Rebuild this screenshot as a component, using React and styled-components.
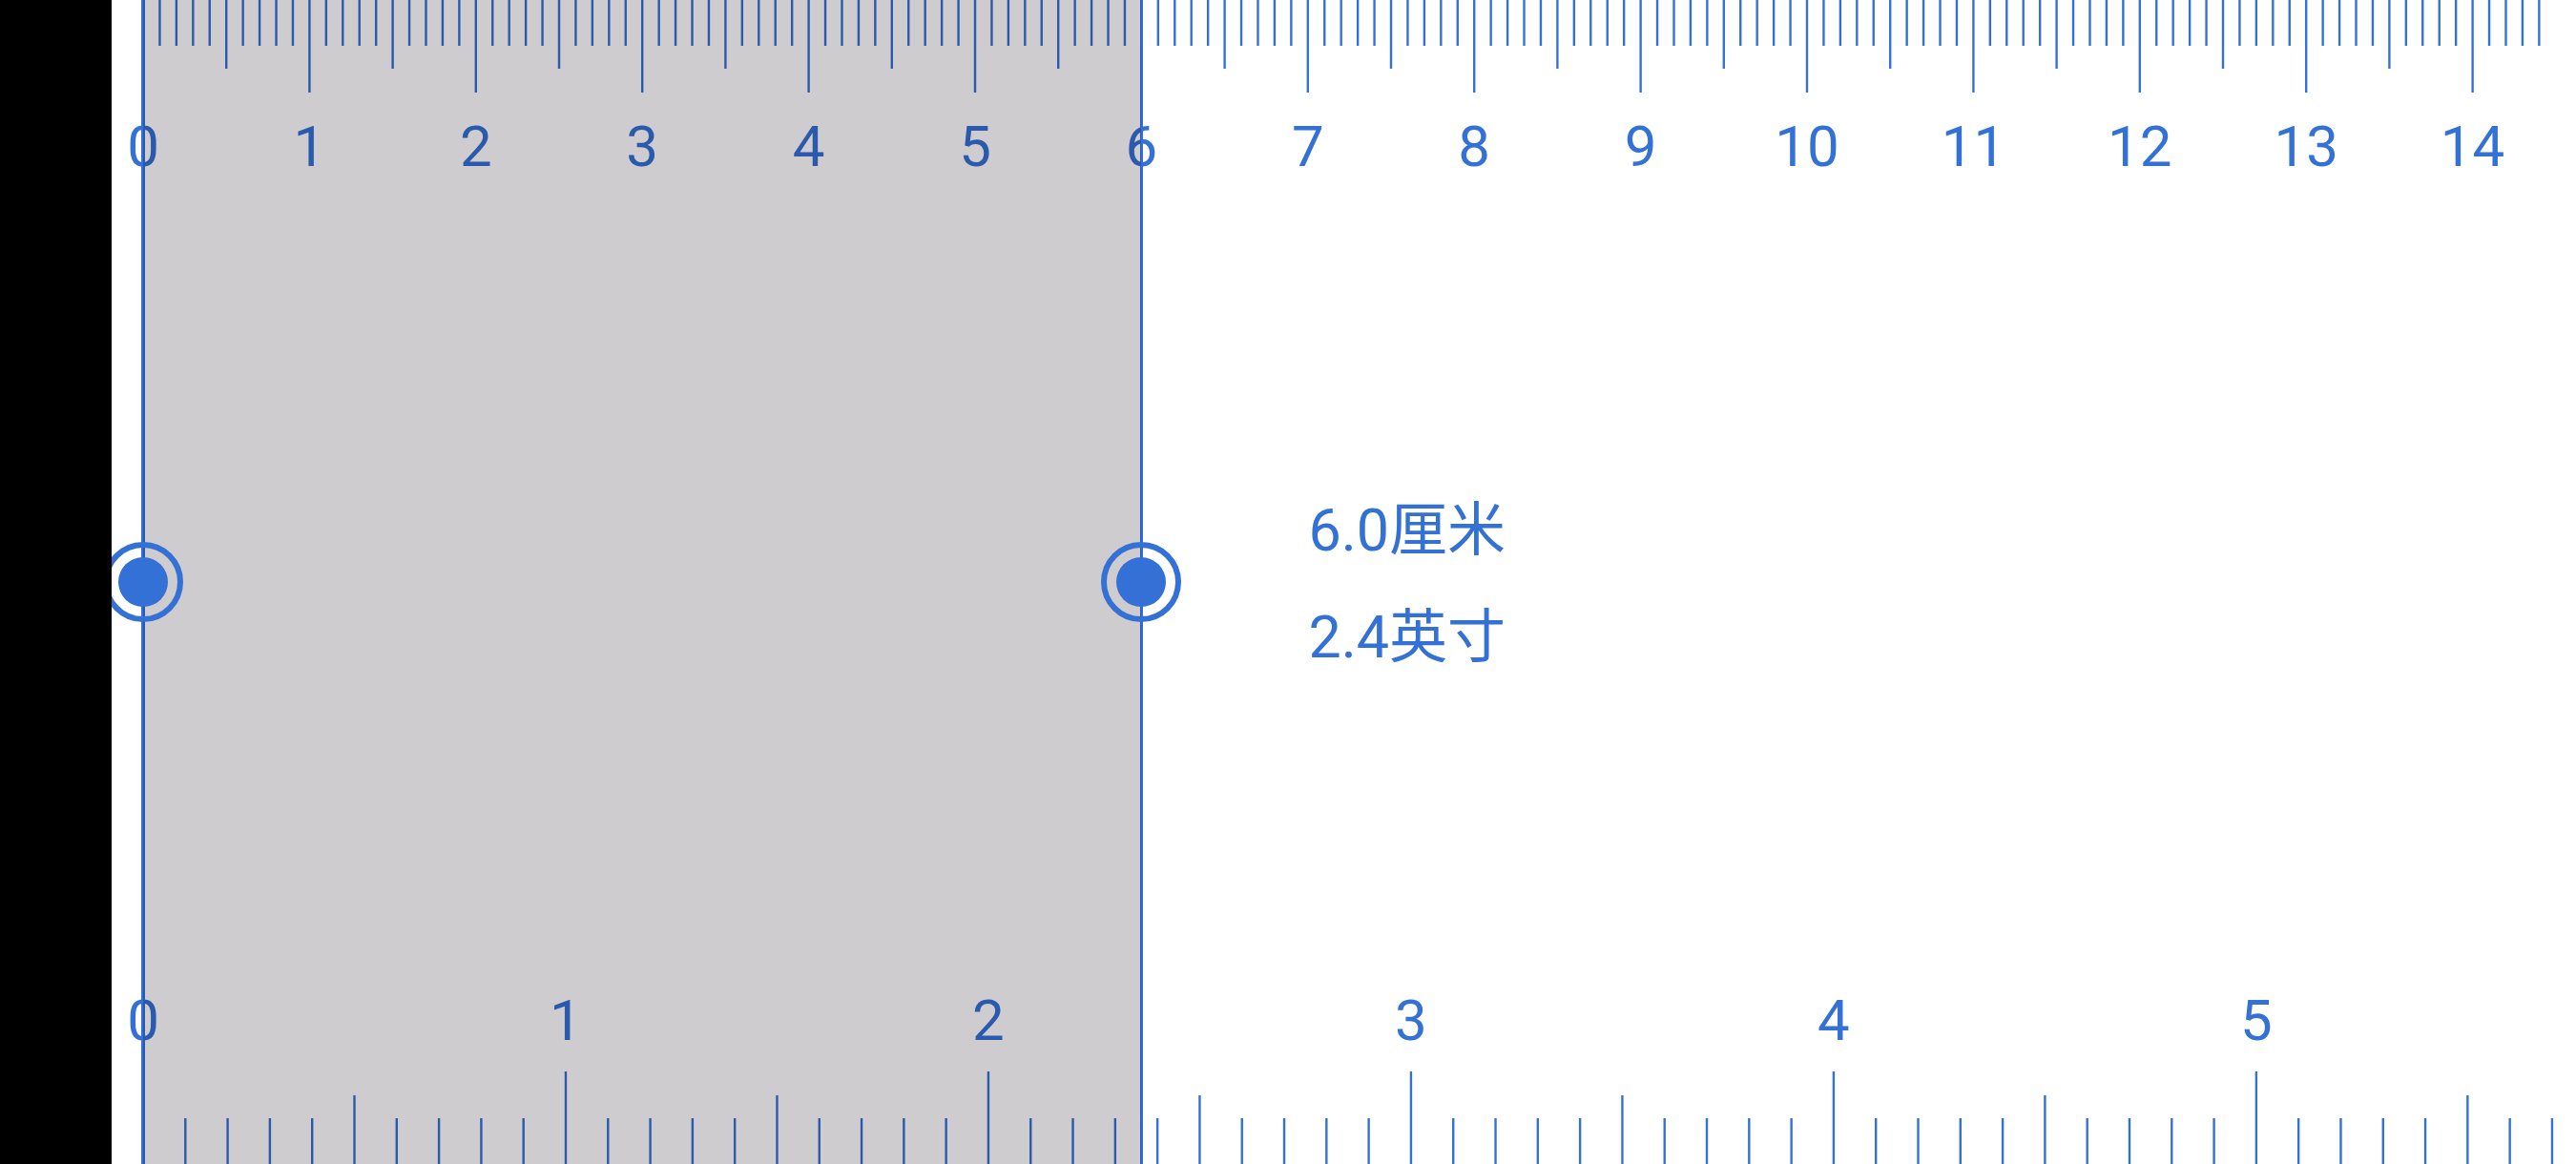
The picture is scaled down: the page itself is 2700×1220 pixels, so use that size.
import React from 'react';
import styled, { createGlobalStyle } from 'styled-components';

// one centimetre on this screen, in css px
const CM = 174.4;
const INCH = CM * 2.54;
const ORIGIN = 33; // zero mark, from the left edge of the ruler
const LIMIT = 2559; // last tick may sit here at most
const SPAN_CM = 6;
const BLUE = '#3371d6';

const GlobalStyle = createGlobalStyle`
  html, body {
    margin: 0;
    height: 100%;
    background: #000;
  }
  #root {
    height: 100%;
  }
`;

const Screen = styled.div`
  display: flex;
  width: 100%;
  height: 100vh;
  background: #000;
  font-family: Roboto, "Noto Sans CJK SC", sans-serif;
`;

const Bezel = styled.div`
  width: 117px;
  flex-shrink: 0;
  background: #000;
`;

const RulerArea = styled.div`
  position: relative;
  flex: 1;
  display: flex;
  flex-direction: column;
  justify-content: space-between;
  overflow: hidden;
  background: #fff;
`;

const Scale = styled.svg`
  display: block;
  width: 100%;
  height: 200px;
  flex-shrink: 0;
`;

const Label = styled.text`
  font-family: Roboto, sans-serif;
  font-size: 60px;
  fill: ${BLUE};
`;

const Selection = styled.div`
  position: absolute;
  top: 0;
  bottom: 0;
  left: ${(p) => p.$from}px;
  width: ${(p) => p.$to - p.$from}px;
  background: rgba(10, 0, 15, 0.2);
  pointer-events: none;
`;

/* full-height cursor: the line, its grip and an optional readout beside it */
const Marker = styled.div`
  position: absolute;
  top: 0;
  bottom: 0;
  left: ${(p) => p.$x}px;
  width: 0;
  display: flex;
  align-items: center;
`;

const EdgeLine = styled.div`
  position: absolute;
  top: 0;
  bottom: 0;
  left: ${(p) => p.$x - 1.75}px;
  width: 3.5px;
  background: ${BLUE};
`;

const Handle = styled.div`
  flex-shrink: 0;
  width: 84px;
  height: 84px;
  margin-left: -42px;
  box-sizing: border-box;
  border: 6.5px solid ${BLUE};
  border-radius: 50%;
  display: flex;
  align-items: center;
  justify-content: center;

  &::after {
    content: '';
    width: 52px;
    height: 52px;
    border-radius: 50%;
    background: ${BLUE};
  }
`;

const Readout = styled.div`
  flex-shrink: 0;
  align-self: flex-start;
  margin-top: 500px;
  margin-left: 133px;
  font-size: 61px;
  line-height: 112px;
  color: ${BLUE};
  white-space: nowrap;
`;

function tickLength(i) {
  if (i % 10 === 0) return 97;
  if (i % 5 === 0) return 72;
  return 48;
}

function buildTicks(unit) {
  const ticks = [];
  for (let i = 0; ORIGIN + (i * unit) / 10 <= LIMIT; i++) {
    ticks.push({ i, x: ORIGIN + (i * unit) / 10, len: tickLength(i) });
  }
  return ticks;
}

function CentimetreScale() {
  const ticks = buildTicks(CM);
  return (
    <Scale>
      {ticks.map((t) => (
        <line key={t.i} x1={t.x} x2={t.x} y1={0} y2={t.len} stroke={BLUE} strokeWidth={2.4} />
      ))}
      {ticks
        .filter((t) => t.i % 10 === 0)
        .map((t) => (
          <Label key={t.i} x={t.x} y={174} textAnchor="middle">
            {t.i / 10}
          </Label>
        ))}
    </Scale>
  );
}

function InchScale() {
  const ticks = buildTicks(INCH);
  return (
    <Scale>
      {ticks.map((t) => (
        <line key={t.i} x1={t.x} x2={t.x} y1={200 - t.len} y2={200} stroke={BLUE} strokeWidth={2.4} />
      ))}
      {ticks
        .filter((t) => t.i % 10 === 0)
        .map((t) => (
          <Label key={t.i} x={t.x} y={70} textAnchor="middle">
            {t.i / 10}
          </Label>
        ))}
    </Scale>
  );
}

export default function App() {
  const start = ORIGIN;
  const end = ORIGIN + SPAN_CM * CM;
  const inches = SPAN_CM / 2.54;

  return (
    <Screen>
      <GlobalStyle />
      <Bezel />
      <RulerArea>
        <CentimetreScale />
        <InchScale />
        <EdgeLine $x={start} />
        <EdgeLine $x={end} />
        <Selection $from={start} $to={end} />
        <Marker $x={start}>
          <Handle />
        </Marker>
        <Marker $x={end}>
          <Handle />
          <Readout>
            <div>{SPAN_CM.toFixed(1)}厘米</div>
            <div>{inches.toFixed(1)}英寸</div>
          </Readout>
        </Marker>
      </RulerArea>
    </Screen>
  );
}
